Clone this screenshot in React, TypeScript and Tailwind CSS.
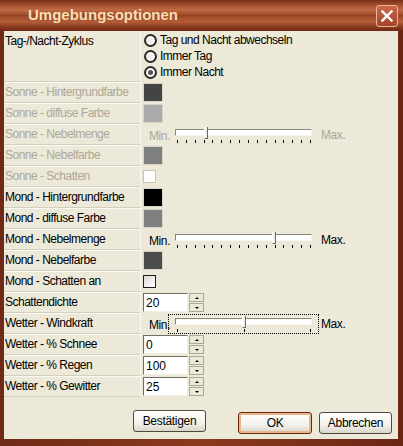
import React from 'react'

const FONT = { fontFamily: '"Liberation Sans", Arial, sans-serif' }

function Radio({ checked, label }: { checked?: boolean; label: string }) {
  return (
    <div className="flex items-center h-[16px]">
      <span className="w-[13px] h-[13px] rounded-full border-[2px] border-[#2a2a2a] bg-[#f4f3ee] flex items-center justify-center">
        {checked && <span className="w-[5px] h-[5px] rounded-full bg-[#555]" />}
      </span>
      <span className="ml-[3px] text-[12px] tracking-[-0.5px] text-black leading-none">{label}</span>
    </div>
  )
}

function Swatch({ color }: { color: string }) {
  return <div className="w-[20px] h-[19px] border border-[#d8d4c6]" style={{ backgroundColor: color }} />
}

function Check({ disabled }: { disabled?: boolean }) {
  return (
    <div
      className={
        'w-[13px] h-[13px] border ' +
        (disabled ? 'border-[#c8c4b4] bg-white' : 'border-[#1c1c1c] bg-[linear-gradient(135deg,#dcdad2,#ffffff)]')
      }
    />
  )
}

function Slider({
  pos,
  ticks,
  disabled,
  focused,
}: {
  pos: number
  ticks: number
  disabled?: boolean
  focused?: boolean
}) {
  const tickList = Array.from({ length: ticks }, (_, i) => i / (ticks - 1))
  const tone = disabled ? 'text-[#aca899]' : 'text-black'
  return (
    <div className="flex items-center h-full">
      <span className={'w-[25px] pl-[6px] text-[12px] tracking-[-0.4px] leading-none pt-[3px] ' + tone}>Min.</span>
      <div className={'relative w-[151px] h-[20px] ' + (focused ? 'border border-dotted border-black' : 'border border-transparent')}>
        <div className="absolute left-[6px] top-[3px] w-[137px] h-[7px] bg-white border-t border-l border-t-[#8a8678] border-l-[#8a8678] border-b border-r border-b-[#f4f3ee] border-r-[#f4f3ee]" />
        <div
          className="absolute top-[1px] w-[4px] h-[12px] bg-[#f1efe6] border-l border-l-white border-r border-r-[#6d6a5e] border-b border-b-[#6d6a5e]"
          style={{ left: 6 + pos * 133 }}
        />
        {tickList.map((t, i) => (
          <div key={i} className="absolute top-[14px] w-[1px] h-[3px] bg-black" style={{ left: 8 + t * 133 }} />
        ))}
      </div>
      <span className={'ml-[2px] text-[12px] tracking-[-0.4px] leading-none ' + tone}>Max.</span>
    </div>
  )
}

function Spin({ value }: { value: string }) {
  return (
    <div className="flex items-center">
      <div className="w-[45px] h-[19px] bg-white border-t border-l border-t-[#716f64] border-l-[#716f64] border-b border-r border-b-[#f1efe2] border-r-[#f1efe2] flex items-center pl-[2px] pt-[1px] text-[12px] leading-none">
        {value}
      </div>
      <div className="ml-[1px] flex flex-col gap-[1px]">
        <div className="w-[15px] h-[9px] bg-[#ece9d8] border border-[#aca899] flex items-center justify-center">
          <span className="w-0 h-0 border-l-[2px] border-r-[2px] border-b-[2px] border-l-transparent border-r-transparent border-b-black" />
        </div>
        <div className="w-[15px] h-[9px] bg-[#ece9d8] border border-[#aca899] flex items-center justify-center">
          <span className="w-0 h-0 border-l-[2px] border-r-[2px] border-t-[2px] border-l-transparent border-r-transparent border-t-black" />
        </div>
      </div>
    </div>
  )
}

function Row({
  label,
  disabled,
  children,
}: {
  label: string
  disabled?: boolean
  children?: React.ReactNode
}) {
  return (
    <div className="flex h-[21px]">
      <div
        className={
          'w-[137px] shrink-0 border-b border-b-[#d3cfbf] border-t border-t-[#faf9f4] border-r border-r-[#faf9f4] pl-[1px] text-[12px] tracking-[-0.5px] leading-[19px] whitespace-nowrap ' +
          (disabled ? 'text-[#aca899]' : 'text-black')
        }
      >
        {label}
      </div>
      <div className="flex-1 flex items-center pl-[2px]">{children}</div>
    </div>
  )
}

function XpButton({ label, focused, w }: { label: string; focused?: boolean; w: string }) {
  return (
    <button
      className={
        'h-[22px] rounded-[3px] border bg-[linear-gradient(180deg,#ffffff_0%,#f3f2ec_60%,#d9d6c8_100%)] text-[12px] tracking-[-0.3px] text-black leading-none ' +
        w +
        (focused ? ' border-[#6b2a10] shadow-[inset_0_0_0_2px_#e9b58a]' : ' border-[#4d4a40]')
      }
    >
      {label}
    </button>
  )
}

export default function App() {
  return (
    <div
      className="w-[403px] h-[446px] flex flex-col bg-[linear-gradient(90deg,#6e2a16_0%,#8d3a1e_50%,#6a2613_100%)]"
      style={FONT}
    >
      {/* title bar */}
      <div className="h-[31px] shrink-0 flex items-center justify-between pl-[28px] pr-[5px] bg-[linear-gradient(180deg,#7a3119_0%,#a65232_18%,#c06a44_32%,#9a4626_50%,#b45c37_70%,#883a1e_88%,#6b2812_100%)]">
        <span className="text-[15px] font-bold text-[#f6dfb4]">Umgebungsoptionen</span>
        <div className="w-[22px] h-[22px] rounded-[3px] border border-[#e8b49c] bg-[linear-gradient(180deg,#c9684a,#a3432a)] flex items-center justify-center">
          <svg width="12" height="12" viewBox="0 0 12 12">
            <path d="M1.5 1.5 L10.5 10.5 M10.5 1.5 L1.5 10.5" stroke="#ffffff" strokeWidth="2.4" strokeLinecap="square" />
          </svg>
        </div>
      </div>

      {/* body */}
      <div className="flex-1 ml-[4px] mr-[5px] mb-[7px] bg-[#ece9d8] flex flex-col">
        <div className="flex h-[51px]">
          <div className="w-[137px] shrink-0 border-b border-b-[#d3cfbf] border-r border-r-[#faf9f4] pl-[1px] pt-[2px] text-[12px] tracking-[-0.5px] leading-[16px] text-black">
            Tag-/Nacht-Zyklus
          </div>
          <div className="flex-1 flex flex-col pl-[3px] pt-[1px]">
            <Radio label="Tag und Nacht abwechseln" />
            <Radio label="Immer Tag" />
            <Radio label="Immer Nacht" checked />
          </div>
        </div>

        <Row label="Sonne - Hintergrundfarbe" disabled>
          <Swatch color="#444444" />
        </Row>
        <Row label="Sonne - diffuse Farbe" disabled>
          <Swatch color="#aaaaaa" />
        </Row>
        <Row label="Sonne - Nebelmenge" disabled>
          <Slider pos={0.22} ticks={16} disabled />
        </Row>
        <Row label="Sonne - Nebelfarbe" disabled>
          <Swatch color="#7f7f7f" />
        </Row>
        <Row label="Sonne - Schatten" disabled>
          <Check disabled />
        </Row>
        <Row label="Mond - Hintergrundfarbe">
          <Swatch color="#000000" />
        </Row>
        <Row label="Mond - diffuse Farbe">
          <Swatch color="#7f7f7f" />
        </Row>
        <Row label="Mond - Nebelmenge">
          <Slider pos={0.73} ticks={16} />
        </Row>
        <Row label="Mond - Nebelfarbe">
          <Swatch color="#4c4c4c" />
        </Row>
        <Row label="Mond - Schatten an">
          <Check />
        </Row>
        <Row label="Schattendichte">
          <Spin value="20" />
        </Row>
        <Row label="Wetter - Windkraft">
          <Slider pos={0.5} ticks={3} focused />
        </Row>
        <Row label="Wetter - % Schnee">
          <Spin value="0" />
        </Row>
        <Row label="Wetter - % Regen">
          <Spin value="100" />
        </Row>
        <Row label="Wetter - % Gewitter">
          <Spin value="25" />
        </Row>

        <div className="flex items-start pt-[13px] pl-[129px]">
          <XpButton label="Bestätigen" w="w-[73px]" />
          <div className="ml-[32px]">
            <XpButton label="OK" w="w-[74px]" focused />
          </div>
          <div className="ml-[7px]">
            <XpButton label="Abbrechen" w="w-[73px]" />
          </div>
        </div>
      </div>
    </div>
  )
}
